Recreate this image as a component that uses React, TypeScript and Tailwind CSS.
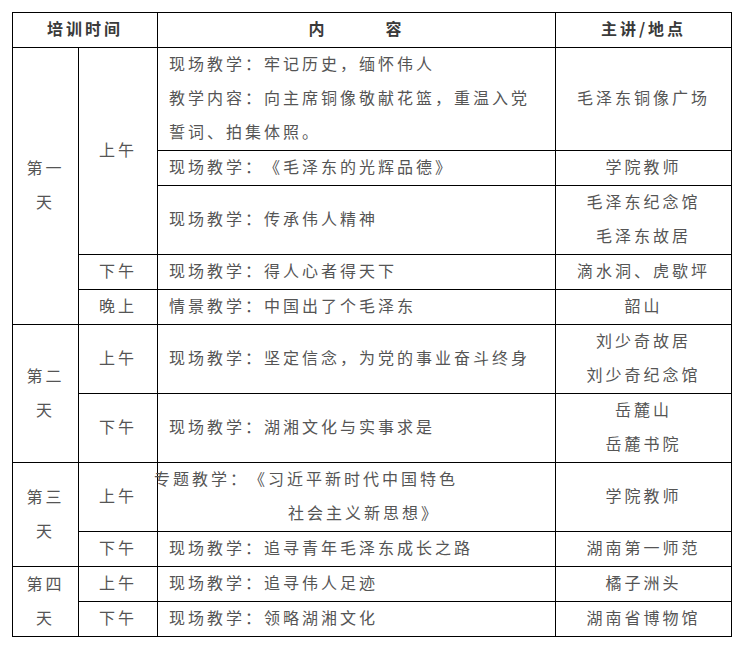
import React from 'react'

const cell = 'border border-black p-0 pb-[4px] align-middle'
const font = { fontFamily: '"Noto Sans CJK SC", "Noto Sans", sans-serif' }

function Lines({ items }: { items: string[] }) {
  return (
    <div className="flex flex-col gap-[4px]">
      {items.map((t) => (
        <div key={t}>{t}</div>
      ))}
    </div>
  )
}

function Content({ children }: { children: React.ReactNode }) {
  return <td className={`${cell} text-left pl-[11px]`}>{children}</td>
}

function Place({ items }: { items: string[] }) {
  return (
    <td className={`${cell} text-center`}>
      <Lines items={items} />
    </td>
  )
}

export default function App() {
  return (
    <div className="bg-white w-[741px] h-[645px] pt-3 pl-3" style={font}>
      <table className="table-fixed border-collapse w-[719px] text-[16px] leading-[30px] tracking-[3px] text-[#555555] [text-spacing-trim:space-all]">
        <colgroup>
          <col className="w-[66px]" />
          <col className="w-[79px]" />
          <col className="w-[398px]" />
          <col className="w-[176px]" />
        </colgroup>
        <tbody>
          <tr className="h-[35px] font-bold text-[#3a3a3a]">
            <td colSpan={2} className={`${cell} text-center`}>培训时间</td>
            <td className={cell}>
              <div className="flex justify-center gap-[58px]">
                <span>内</span>
                <span>容</span>
              </div>
            </td>
            <td className={`${cell} text-center`}>主讲/地点</td>
          </tr>

          {/* 第一天 */}
          <tr className="h-[103px]">
            <td rowSpan={5} className={`${cell} text-center`}>
              <Lines items={['第一', '天']} />
            </td>
            <td rowSpan={3} className={`${cell} text-center`}>上午</td>
            <Content>
              <Lines
                items={[
                  '现场教学：牢记历史，缅怀伟人',
                  '教学内容：向主席铜像敬献花篮，重温入党',
                  '誓词、拍集体照。',
                ]}
              />
            </Content>
            <Place items={['毛泽东铜像广场']} />
          </tr>
          <tr className="h-[35px]">
            <Content>现场教学：《毛泽东的光辉品德》</Content>
            <Place items={['学院教师']} />
          </tr>
          <tr className="h-[69px]">
            <Content>现场教学：传承伟人精神</Content>
            <Place items={['毛泽东纪念馆', '毛泽东故居']} />
          </tr>
          <tr className="h-[35px]">
            <td className={`${cell} text-center`}>下午</td>
            <Content>现场教学：得人心者得天下</Content>
            <Place items={['滴水洞、虎歇坪']} />
          </tr>
          <tr className="h-[35px]">
            <td className={`${cell} text-center`}>晚上</td>
            <Content>情景教学：中国出了个毛泽东</Content>
            <Place items={['韶山']} />
          </tr>

          {/* 第二天 */}
          <tr className="h-[69px]">
            <td rowSpan={2} className={`${cell} text-center`}>
              <Lines items={['第二', '天']} />
            </td>
            <td className={`${cell} text-center`}>上午</td>
            <Content>现场教学：坚定信念，为党的事业奋斗终身</Content>
            <Place items={['刘少奇故居', '刘少奇纪念馆']} />
          </tr>
          <tr className="h-[69px]">
            <td className={`${cell} text-center`}>下午</td>
            <Content>现场教学：湖湘文化与实事求是</Content>
            <Place items={['岳麓山', '岳麓书院']} />
          </tr>

          {/* 第三天 */}
          <tr className="h-[69px]">
            <td rowSpan={2} className={`${cell} text-center`}>
              <Lines items={['第三', '天']} />
            </td>
            <td className={`${cell} text-center`}>上午</td>
            <Content>
              <div className="flex flex-col gap-[4px] whitespace-nowrap">
                <div className="-ml-[15px]">专题教学：《习近平新时代中国特色</div>
                <div className="pl-[119px]">社会主义新思想》</div>
              </div>
            </Content>
            <Place items={['学院教师']} />
          </tr>
          <tr className="h-[35px]">
            <td className={`${cell} text-center`}>下午</td>
            <Content>现场教学：追寻青年毛泽东成长之路</Content>
            <Place items={['湖南第一师范']} />
          </tr>

          {/* 第四天 */}
          <tr className="h-[35px]">
            <td rowSpan={2} className={`${cell} text-center`}>
              <Lines items={['第四', '天']} />
            </td>
            <td className={`${cell} text-center`}>上午</td>
            <Content>现场教学：追寻伟人足迹</Content>
            <Place items={['橘子洲头']} />
          </tr>
          <tr className="h-[35px]">
            <td className={`${cell} text-center`}>下午</td>
            <Content>现场教学：领略湖湘文化</Content>
            <Place items={['湖南省博物馆']} />
          </tr>
        </tbody>
      </table>
    </div>
  )
}
